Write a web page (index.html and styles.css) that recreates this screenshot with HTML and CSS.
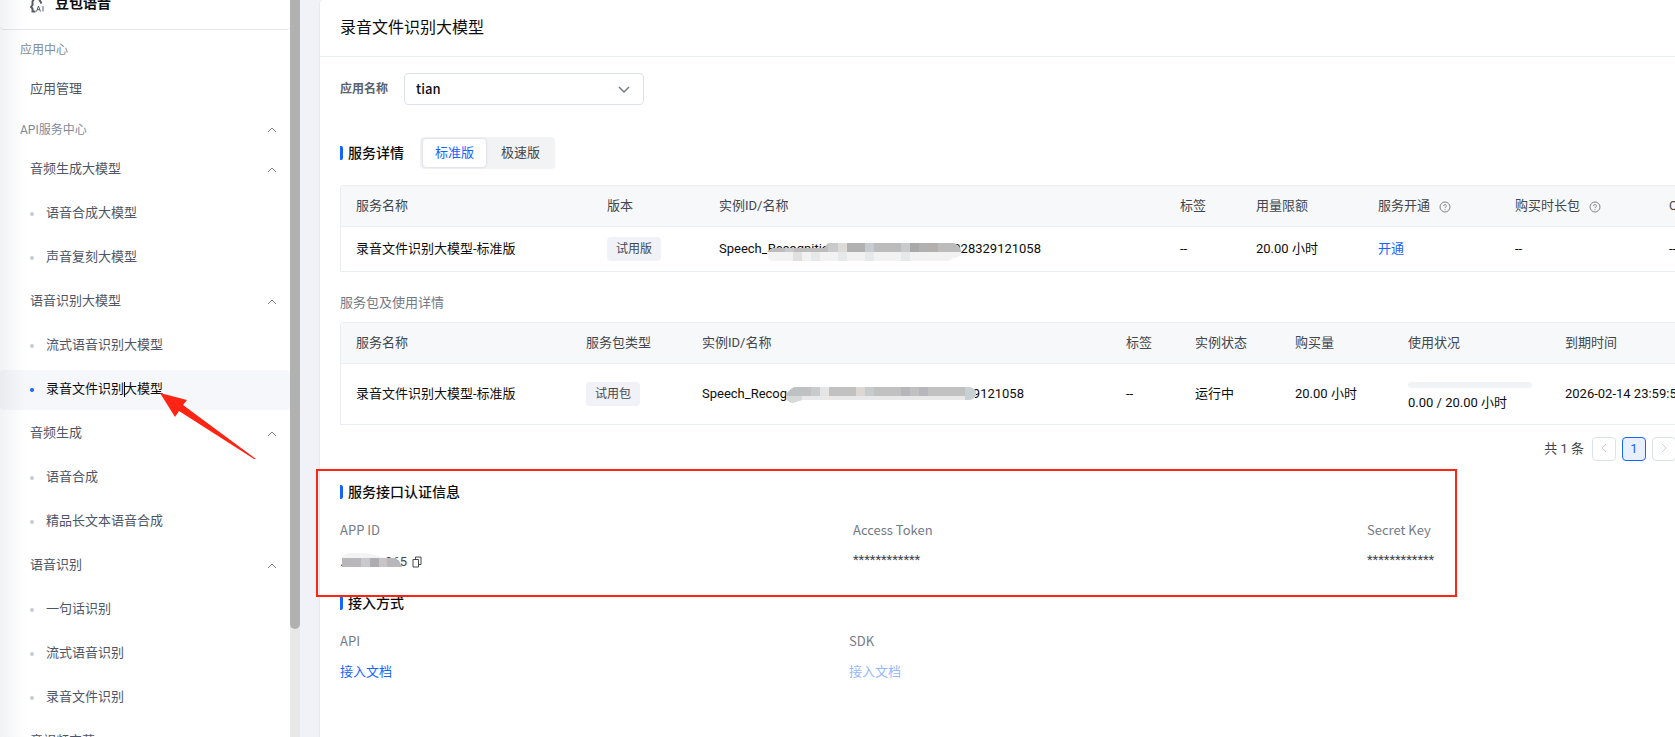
FILE: index.html
```html
<!DOCTYPE html>
<html lang="zh-CN">
  <head>
    <meta charset="utf-8">
    <title>豆包语音</title>
    <link rel="stylesheet" href="styles.css">
  </head>
  <body>
    <svg class="defs" aria-hidden="true">
      <symbol id="up" viewBox="0 0 10 6"><path d="M1 5l4-4 4 4"/></symbol>
      <symbol id="help" viewBox="0 0 12 12">
        <circle cx="6" cy="6" r="5"/>
        <path d="M4.6 5a1.4 1.4 0 1 1 2 1.2c-.5.2-.6.4-.6.9M6 8.2v.9"/>
      </symbol>
    </svg>
    <div class="app">
      <nav class="sidebar">
        <div class="brand">
          <svg class="brand-icon" viewBox="0 0 14 16">
            <path d="M4.500 1L2.500 4.500v3.500L1 10l1.500 1.500v3h3M8.500 1l3 5.500"/>
            <path class="ai" d="M6.500 14.500L8.500 9l2 5.500M7.200 12.700h2.600M13 9v5.500"/>
          </svg>
          <strong>豆包语音</strong>
        </div>
        <div class="group">应用中心</div>
        <a class="item" href="#">应用管理</a>
        <div class="group">API服务中心<svg class="up"><use href="#up"/></svg></div>
        <a class="item" href="#">音频生成大模型<svg class="up"><use href="#up"/></svg></a>
        <a class="item sub" href="#">语音合成大模型</a>
        <a class="item sub" href="#">声音复刻大模型</a>
        <a class="item" href="#">语音识别大模型<svg class="up"><use href="#up"/></svg></a>
        <a class="item sub" href="#">流式语音识别大模型</a>
        <a class="item sub active" href="#">录音文件识别大模型
          <span class="caret"></span>
          <svg class="arrow" viewBox="0 0 96 67"><path d="M0 0L27 7 23 12 96 66 94 66 19 18 15 24z"/></svg>
        </a>
        <a class="item" href="#">音频生成<svg class="up"><use href="#up"/></svg></a>
        <a class="item sub" href="#">语音合成</a>
        <a class="item sub" href="#">精品长文本语音合成</a>
        <a class="item" href="#">语音识别<svg class="up"><use href="#up"/></svg></a>
        <a class="item sub" href="#">一句话识别</a>
        <a class="item sub" href="#">流式语音识别</a>
        <a class="item sub" href="#">录音文件识别</a>
        <a class="item" href="#">音视频字幕</a>
      </nav>
      <div class="scrollbar"><div class="thumb"></div></div>

      <main class="panel">
        <h1>录音文件识别大模型</h1>
        <div class="content">
          <div class="field">
            <label for="app-name">应用名称</label>
            <div class="select">
              <select id="app-name"><option>tian</option></select>
              <svg viewBox="0 0 12 8"><path d="M1 1l5 5 5-5"/></svg>
            </div>
          </div>

          <div class="detail-head">
            <h2>服务详情</h2>
            <div class="tabs">
              <button class="on" type="button">标准版</button>
              <button type="button">极速版</button>
            </div>
          </div>

          <div class="table-wrap">
            <table class="services">
              <thead>
                <tr>
                  <th>服务名称</th>
                  <th>版本</th>
                  <th>实例ID/名称</th>
                  <th>标签</th>
                  <th>用量限额</th>
                  <th>服务开通<svg class="help"><use href="#help"/></svg></th>
                  <th>购买时长包<svg class="help"><use href="#help"/></svg></th>
                  <th>QPS</th>
                </tr>
              </thead>
              <tbody>
                <tr>
                  <td>录音文件识别大模型-标准版</td>
                  <td><span class="tag">试用版</span></td>
                  <td>
                    <div class="masked">
                      <span>Speech_Recognition</span><span>028329121058</span>
                      <svg class="mask mask-a" viewBox="0 0 194 18">
                        <defs><clipPath id="clip-a"><path d="M0 9l5-4h52l4-5h126q7 3 7 9-1 6-8 6l-4 3H5Q0 17 0 9z"/></clipPath></defs>
                        <g clip-path="url(#clip-a)">
                          <path fill="#bcbcbc" d="M0 0h194v9H0z"/>
                          <path fill="#f2f2f2" d="M0 9h194v9H0z"/>
                          <path fill="#c9cacb" d="M18 0h9v9h-9zM61 0h10v9H61zM134 0h9v9h-9z"/>
                          <path fill="#dcdbd7" d="M71 0h9v9h-9z"/>
                          <path fill="#b1b1b1" d="M80 0h18v9H80zM152 0h10v9h-10z"/>
                          <path fill="#c5cbd0" d="M98 0h9v9h-9z"/>
                          <path fill="#a9a9a9" d="M143 0h9v9h-9z"/>
                          <path fill="#b3afac" d="M162 0h9v9h-9z"/>
                          <path fill="#e1e0de" d="M26 9h9v9h-9z"/>
                          <path fill="#e7e8e9" d="M44 9h9v9h-9zM71 9h9v9h-9zM98 9h9v9h-9zM134 9h9v9h-9z"/>
                        </g>
                      </svg>
                    </div>
                  </td>
                  <td>--</td>
                  <td>20.00 小时</td>
                  <td><a href="#">开通</a></td>
                  <td>--</td>
                  <td>--</td>
                </tr>
              </tbody>
            </table>
          </div>

          <h3>服务包及使用详情</h3>
          <div class="table-wrap">
            <table class="packages">
              <thead>
                <tr>
                  <th>服务名称</th>
                  <th>服务包类型</th>
                  <th>实例ID/名称</th>
                  <th>标签</th>
                  <th>实例状态</th>
                  <th>购买量</th>
                  <th>使用状况</th>
                  <th>到期时间</th>
                </tr>
              </thead>
              <tbody>
                <tr>
                  <td>录音文件识别大模型-标准版</td>
                  <td><span class="tag">试用包</span></td>
                  <td>
                    <div class="masked">
                      <span>Speech_Recog</span><span>9121058</span>
                      <svg class="mask mask-b" viewBox="0 0 190 16">
                        <defs><clipPath id="clip-b"><path d="M0 8Q4 0 11 0h171q8 1 8 7-1 6-8 6H16l-9 3Q0 15 0 8z"/></clipPath></defs>
                        <g clip-path="url(#clip-b)">
                          <path fill="#c1c1c1" d="M0 0h190v9H0z"/>
                          <path fill="#e9e9e9" d="M0 9h190v7H0z"/>
                          <path fill="#bdc3c2" d="M7 0h9v9H7z"/>
                          <path fill="#c8cbce" d="M25 0h9v9h-9zM79 0h9v9h-9z"/>
                          <path fill="#e5e5e5" d="M34 0h9v9h-9z"/>
                          <path fill="#dcd8d4" d="M70 0h9v9h-9z"/>
                          <path fill="#b6b6bb" d="M115 0h9v9h-9zM133 0h9v9h-9z"/>
                          <path fill="#c9d0d3" d="M179 0h11v13h-11z"/>
                          <path fill="#d5d9d8" d="M0 9h16v7H0z"/>
                        </g>
                      </svg>
                    </div>
                  </td>
                  <td>--</td>
                  <td>运行中</td>
                  <td>20.00 小时</td>
                  <td class="usage"><div class="bar"></div>0.00 / 20.00 小时</td>
                  <td>2026-02-14 23:59:59</td>
                </tr>
              </tbody>
            </table>
          </div>

          <div class="pager">
            <span>共 1 条</span>
            <button type="button" aria-label="上一页" disabled><svg viewBox="0 0 6 10"><path d="M5 1L1 5l4 4"/></svg></button>
            <button class="on" type="button">1</button>
            <button type="button" aria-label="下一页" disabled><svg viewBox="0 0 6 10"><path d="M1 1l4 4-4 4"/></svg></button>
          </div>

          <section class="auth">
            <h2>服务接口认证信息</h2>
            <dl>
              <div>
                <dt>APP ID</dt>
                <dd class="app-id">
                  <div class="masked">
                    <span>.</span><span>065</span>
                    <svg class="mask mask-c" viewBox="0 0 60 14">
                      <path fill="#f3f3f3" d="M0 5Q2 0 10 0h14q10 3 20 5z"/>
                      <path fill="#b9b7b9" d="M0 5h53q5 3 7 9H0z"/>
                      <path fill="#c8c8ce" d="M19 5h9v9h-9z"/>
                      <path fill="#adadb1" d="M28 5h9v9h-9z"/>
                      <path fill="#c9c5c7" d="M37 5h8v9h-8z"/>
                    </svg>
                  </div>
                  <button class="copy" type="button" aria-label="复制">
                    <svg viewBox="0 0 10 12"><path d="M1 3.500h5.500v7.500H1zM3.500 3.500V1H9v7.500H6.500"/></svg>
                  </button>
                </dd>
              </div>
              <div>
                <dt>Access Token</dt>
                <dd>************</dd>
              </div>
              <div>
                <dt>Secret Key</dt>
                <dd>************</dd>
              </div>
            </dl>
          </section>

          <section class="access">
            <h2>接入方式</h2>
            <dl>
              <div>
                <dt>API</dt>
                <dd><a href="#">接入文档</a></dd>
              </div>
              <div>
                <dt>SDK</dt>
                <dd><a class="off" href="#">接入文档</a></dd>
              </div>
            </dl>
          </section>
        </div>
      </main>
    </div>
  </body>
</html>
```

FILE: styles.css
```css
* { box-sizing: border-box; }
body {
  margin: 0;
  overflow: hidden;
  font: 13px/20px Roboto, "Noto Sans CJK SC", sans-serif;
  color: #0c0d0e;
}
h1, h2, h3, dl, dd { margin: 0; font-weight: 400; }
a { color: #1664ff; text-decoration: none; }
button, select { font: inherit; }
svg { fill: none; stroke: #80838a; }
.defs { position: absolute; width: 0; height: 0; }

.app { display: flex; height: 100vh; background: #f1f2f8; }

/* sidebar */
.sidebar {
  position: relative;
  flex: 0 0 290px;
  background: #fff;
}
.sidebar::before {
  content: '';
  position: absolute;
  top: 0; bottom: 0; left: 0;
  width: 26px;
  background: linear-gradient(90deg, rgba(100, 120, 130, 0.09), rgba(100, 120, 130, 0));
  pointer-events: none;
  z-index: 1;
}
.brand {
  display: flex;
  align-items: flex-end;
  gap: 11px;
  height: 30px;
  padding: 0 30px 16px;
  border-bottom: 1px solid #e5e6eb;
  border-radius: 0 0 4px 4px;
  font-size: 14px;
}
.brand strong { font-weight: 700; }
.brand-icon { flex: none; width: 14px; height: 16px; stroke: #565c66; stroke-width: 2; }
.brand-icon .ai { stroke-width: 1; }
.group, .item {
  position: relative;
  display: flex;
  align-items: center;
  justify-content: space-between;
  height: 40px;
  padding: 0 13px 0 20px;
}
.group { font-size: 12px; color: #80899b; }
.item { padding: 0 13px 2px 30px; color: #4e5566; }
.item + .item { margin-top: 4px; }
.up { width: 10px; height: 6px; }
.item .up { margin-top: 2px; }
.sub { justify-content: flex-start; gap: 12px; }
.sub::before {
  content: '';
  flex: none;
  width: 4px;
  height: 4px;
  margin-top: 2px;
  background: #c7ccd6;
  border-radius: 50%;
}
.sub.active { background: #f6f7fa; border-radius: 4px; color: #0c0d0e; }
.sub.active::before { background: #1664ff; }
.caret {
  position: absolute;
  left: 124px;
  top: 12px;
  width: 1px;
  height: 15px;
  background: #000;
}
.arrow {
  position: absolute;
  left: 160px;
  top: 23px;
  width: 96px;
  height: 67px;
  fill: #ff2414;
  stroke: none;
  z-index: 2;
}
.scrollbar { flex: 0 0 10px; background: #e8e8e8; }
.thumb { height: 629px; background: #b1b1b1; border-radius: 0 0 5px 5px; }

/* panel */
.panel {
  flex: 1;
  min-width: 0;
  margin-left: 19px;
  background: #fff;
  border-left: 1px solid #e5e8ef;
  border-radius: 4px 0 0 0;
}
h1 {
  padding: 16px 20px;
  line-height: 24px;
  font-size: 16px;
  border-bottom: 1px solid #eaedf1;
}
.content { padding: 16px 0 0 20px; }
.field { display: flex; align-items: center; gap: 16px; }
.field label { font-size: 12px; font-weight: 700; color: #5a616e; }
.select { position: relative; width: 240px; }
.select select {
  display: block;
  width: 100%;
  height: 32px;
  padding: 0 11px;
  appearance: none;
  background: #fff;
  border: 1px solid #dde2e9;
  border-radius: 4px;
  font-family: "Noto Sans CJK SC", sans-serif;
  font-weight: 500;
  color: #0c0d0e;
}
.select svg {
  position: absolute;
  right: 14px;
  top: 13px;
  width: 12px;
  height: 8px;
  stroke: #737a87;
  stroke-width: 1.500;
  pointer-events: none;
}

h2 {
  display: flex;
  align-items: center;
  gap: 5px;
  font-size: 14px;
  font-weight: 500;
}
h2::before {
  content: '';
  width: 3px;
  height: 14px;
  background: #1664ff;
  border-radius: 0 2px 2px 0;
}
.detail-head { display: flex; align-items: center; gap: 16px; margin: 32px 0 16px; }
.tabs { display: flex; gap: 3px; padding: 2px 3px; background: #f2f3f5; border-radius: 4px; }
.tabs button {
  height: 28px;
  padding: 0 12px;
  background: none;
  border: 0;
  border-radius: 4px;
  color: #42464e;
}
.tabs .on { background: #fff; color: #1664ff; box-shadow: 0 0 2px 1px #dde0e6; }

/* tables */
.table-wrap {
  overflow: hidden;
  border: 1px solid #eaedf1;
  border-right: 0;
  border-radius: 4px 0 0 0;
}
table { width: 1500px; table-layout: fixed; border-spacing: 0; }
th, td { padding: 0 0 0 15px; text-align: left; white-space: nowrap; }
th {
  height: 41px;
  padding-bottom: 1px;
  background: #f6f8fa;
  border-bottom: 1px solid #eaedf1;
  font-weight: 400;
  color: #42464e;
}
.services td { height: 44px; }
.services th:nth-child(1) { width: 251px; }
.services th:nth-child(2) { width: 112px; }
.services th:nth-child(3) { width: 461px; }
.services th:nth-child(4) { width: 76px; }
.services th:nth-child(5) { width: 122px; }
.services th:nth-child(6) { width: 137px; }
.services th:nth-child(7) { width: 154px; }
.packages td { height: 60px; }
.packages th:nth-child(1) { width: 230px; }
.packages th:nth-child(2) { width: 116px; }
.packages th:nth-child(3) { width: 424px; }
.packages th:nth-child(4) { width: 69px; }
.packages th:nth-child(5) { width: 100px; }
.packages th:nth-child(6) { width: 113px; }
.packages th:nth-child(7) { width: 157px; }
.help { width: 12px; height: 12px; margin-left: 9px; vertical-align: -3px; }
.tag {
  display: inline-block;
  padding: 0 9px;
  line-height: 24px;
  background: #f1f2f8;
  border-radius: 4px;
  font-size: 12px;
  color: #42464e;
}
.packages .usage { padding-top: 6px; }
.bar { width: 124px; height: 6px; margin-bottom: 5px; background: #f2f3f5; border-radius: 3px; }

/* ids with the middle part covered */
.masked { position: relative; display: flex; justify-content: space-between; width: 322px; }
.mask { position: absolute; stroke: none; }
.mask-a { left: 48px; top: 4px; width: 194px; height: 18px; }
.mask-b { left: 84px; top: 3px; width: 190px; height: 16px; }

h3 { margin: 21px 0 9px; font-size: 13px; color: #737a87; }

.pager {
  display: flex;
  justify-content: flex-end;
  align-items: center;
  gap: 6px;
  margin: 12px -1px 21px 0;
  color: #42464e;
}
.pager span { margin-right: 2px; }
.pager button {
  width: 24px;
  height: 24px;
  padding: 0;
  background: #fff;
  border: 1px solid #dde2e9;
  border-radius: 4px;
}
.pager .on { background: #e8f0ff; border-color: #1664ff; color: #1664ff; }
.pager svg { width: 6px; height: 10px; stroke: #c7ccd6; }

/* credentials */
section dl { display: grid; margin-top: 18px; font-family: "Noto Sans CJK SC", sans-serif; }
dt { margin-bottom: 10px; color: #737a87; }
dd { height: 20px; color: #42464e; }
.auth { position: relative; }
.auth::after {
  content: '';
  position: absolute;
  left: -24px;
  right: 218px;
  top: -13px;
  bottom: -23px;
  border: 2px solid #ff2414;
}
.auth dl { grid-template-columns: 513fr 514fr 308fr; }
.auth dd { font-family: Roboto, sans-serif; }
.auth .app-id { display: flex; align-items: center; gap: 5px; height: 24px; }
.app-id .masked { width: 67px; }
.mask-c { left: 2px; top: 1px; width: 60px; height: 14px; }
.copy { display: flex; padding: 0; background: none; border: 0; }
.copy svg { width: 10px; height: 12px; stroke: #42464e; }
.access { margin-top: 19px; }
.access dl { grid-template-columns: 509fr 826fr; }
.off { color: #94b8ff; }
```
